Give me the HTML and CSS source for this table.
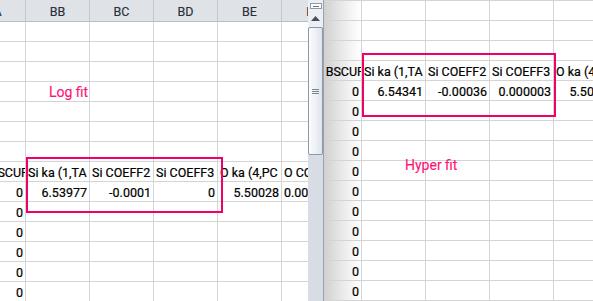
FILE: index.html
```html
<!DOCTYPE html>
<html>
<head>
<meta charset="utf-8">
<title>Log fit vs Hyper fit</title>
<link rel="stylesheet" href="styles.css">
</head>
<body>
<div class="screen">
  <section class="sheet sheet-left">
    <div class="grid grid-left">
      <div class="hd hd-a">A</div><div class="hd">BB</div><div class="hd">BC</div><div class="hd">BD</div><div class="hd">BE</div><div class="hd">BF</div>
      <div class="c"></div><div class="c"></div><div class="c"></div><div class="c"></div><div class="c"></div><div class="c"></div>
      <div class="c"></div><div class="c"></div><div class="c"></div><div class="c"></div><div class="c"></div><div class="c"></div>
      <div class="c"></div><div class="c"></div><div class="c"></div><div class="c"></div><div class="c"></div><div class="c"></div>
      <div class="c"></div><div class="c"></div><div class="c"></div><div class="c"></div><div class="c"></div><div class="c"></div>
      <div class="c"></div><div class="c"></div><div class="c"></div><div class="c"></div><div class="c"></div><div class="c"></div>
      <div class="c"></div><div class="c"></div><div class="c"></div><div class="c"></div><div class="c"></div><div class="c"></div>
      <div class="c"></div><div class="c"></div><div class="c"></div><div class="c"></div><div class="c"></div><div class="c"></div>
      <div class="c clip"><span>BSCUF</span></div><div class="c">Si ka (1,TA</div><div class="c">Si COEFF2</div><div class="c">Si COEFF3</div><div class="c">O ka (4,PC</div><div class="c">O COEFF2</div>
      <div class="c n">0</div><div class="c n">6.53977</div><div class="c n">-0.0001</div><div class="c n">0</div><div class="c n">5.50028</div><div class="c n">0.0004988</div>
      <div class="c n">0</div><div class="c"></div><div class="c"></div><div class="c"></div><div class="c"></div><div class="c"></div>
      <div class="c n">0</div><div class="c"></div><div class="c"></div><div class="c"></div><div class="c"></div><div class="c"></div>
      <div class="c n">0</div><div class="c"></div><div class="c"></div><div class="c"></div><div class="c"></div><div class="c"></div>
      <div class="c n">0</div><div class="c"></div><div class="c"></div><div class="c"></div><div class="c"></div><div class="c"></div>
      <div class="c n">0</div><div class="c"></div><div class="c"></div><div class="c"></div><div class="c"></div><div class="c"></div>
    </div>
    <div class="note note-log">Log fit</div>
    <div class="mark mark-left"></div>
  </section>

  <div class="vscroll">
    <div class="vs-top">
      <div class="vs-split"><i></i></div>
      <svg class="vs-arrow" width="9" height="5" viewBox="0 0 9 5"><path d="M4.5 0 L9 5 L0 5 Z" fill="#4a4f57"/></svg>
    </div>
    <div class="vs-thumb">
      <div class="vs-grip"><i></i><i></i><i></i></div>
    </div>
  </div>

  <section class="sheet sheet-right">
    <div class="grid grid-right">
      <div class="c"></div><div class="c"></div><div class="c"></div><div class="c"></div><div class="c"></div>
      <div class="c"></div><div class="c"></div><div class="c"></div><div class="c"></div><div class="c"></div>
      <div class="c"></div><div class="c"></div><div class="c"></div><div class="c"></div><div class="c"></div>
      <div class="c clip"><span>BSCUF</span></div><div class="c">Si ka (1,TA</div><div class="c">Si COEFF2</div><div class="c">Si COEFF3</div><div class="c">O ka (4,PC</div>
      <div class="c n">0</div><div class="c n">6.54341</div><div class="c n">-0.00036</div><div class="c n">0.000003</div><div class="c n">5.50166</div>
      <div class="c n">0</div><div class="c"></div><div class="c"></div><div class="c"></div><div class="c"></div>
      <div class="c n">0</div><div class="c"></div><div class="c"></div><div class="c"></div><div class="c"></div>
      <div class="c n">0</div><div class="c"></div><div class="c"></div><div class="c"></div><div class="c"></div>
      <div class="c n">0</div><div class="c"></div><div class="c"></div><div class="c"></div><div class="c"></div>
      <div class="c n">0</div><div class="c"></div><div class="c"></div><div class="c"></div><div class="c"></div>
      <div class="c n">0</div><div class="c"></div><div class="c"></div><div class="c"></div><div class="c"></div>
      <div class="c n">0</div><div class="c"></div><div class="c"></div><div class="c"></div><div class="c"></div>
      <div class="c n">0</div><div class="c"></div><div class="c"></div><div class="c"></div><div class="c"></div>
      <div class="c n">0</div><div class="c"></div><div class="c"></div><div class="c"></div><div class="c"></div>
      <div class="c n">0</div><div class="c"></div><div class="c"></div><div class="c"></div><div class="c"></div>
    </div>
    <div class="note note-hyper">Hyper fit</div>
    <div class="mark mark-right"></div>
  </section>
</div>
</body>
</html>
```

FILE: styles.css
```css
* { box-sizing: border-box; }

html, body {
  margin: 0;
  padding: 0;
}

body {
  width: 593px;
  height: 301px;
  overflow: hidden;
  background: #fff;
  font-family: Roboto, "Liberation Sans", sans-serif;
  font-size: 12.5px;
  color: #000;
}

.screen {
  display: flex;
  height: 301px;
}

.sheet {
  position: relative;
  overflow: hidden;
  height: 301px;
}

.sheet-left {
  width: 308px;
  flex: none;
}

.sheet-right {
  flex: 1;
  background: linear-gradient(90deg, #d0d0d0 0, #e6e6e6 16px, #f8f8f8 30px, #fff 37px);
}

.grid {
  display: grid;
  width: max-content;
}

.grid-left {
  grid-template-columns: repeat(6, 64px);
  margin-left: -38px;
}

.grid-right {
  grid-template-columns: 38px repeat(4, 64px);
  border-top: 1px solid #d4d4d4;
}

.hd {
  height: 22px;
  background: #dfe3e8;
  border-right: 1px solid #c4c9cf;
  border-bottom: 1px solid #b8bec6;
  line-height: 24px;
  text-align: center;
  color: #2a3039;
  white-space: nowrap;
  overflow: hidden;
  -webkit-text-stroke: 0.15px #2a3039;
}

.hd-a {
  padding-left: 8px;
}

.c {
  height: 20px;
  border-right: 1px solid #d4d4d4;
  border-bottom: 1px solid #d4d4d4;
  line-height: 21px;
  padding: 0 2px;
  white-space: nowrap;
  overflow: hidden;
  -webkit-text-stroke: 0.2px #000;
}

.n {
  text-align: right;
}

.clip {
  display: flex;
  justify-content: flex-end;
  padding: 0;
}

.clip span {
  flex: none;
  margin-right: -3px;
}

.note {
  position: absolute;
  font-size: 14px;
  line-height: 16px;
  color: #ff1477;
  white-space: nowrap;
  -webkit-text-stroke: 0.15px #ff1477;
}

.note-log {
  left: 49px;
  top: 84px;
}

.note-hyper {
  left: 81px;
  top: 157px;
}

.mark {
  position: absolute;
  border: 2px solid #f2006a;
}

.mark-left {
  left: 26px;
  top: 157px;
  width: 197px;
  height: 56px;
}

.mark-right {
  left: 38px;
  top: 53px;
  width: 194px;
  height: 64px;
}

/* vertical scrollbar of the left window */
.vscroll {
  width: 16px;
  flex: none;
  height: 301px;
  background: #d8dde5;
  border-right: 1px solid #9ba2ac;
  display: flex;
  flex-direction: column;
}

.vs-top {
  height: 27px;
  flex: none;
  background: #eceff3;
  display: flex;
  flex-direction: column;
  align-items: center;
}

.vs-split {
  width: 12px;
  height: 6px;
  margin-top: 3px;
  border: 1px solid #8f98a4;
  background: #fff;
  display: flex;
  align-items: center;
  justify-content: center;
}

.vs-split i {
  display: block;
  width: 6px;
  height: 1px;
  background: #6d737c;
}

.vs-arrow {
  display: block;
  margin-top: 7px;
}

.vs-thumb {
  height: 128px;
  flex: none;
  border: 1px solid #8e99a7;
  border-radius: 2px;
  background: linear-gradient(90deg, #fbfcfd 0, #eef1f5 50%, #dfe4ec 100%);
  display: flex;
  align-items: center;
  justify-content: center;
}

.vs-grip {
  display: flex;
  flex-direction: column;
  gap: 1px;
}

.vs-grip i {
  display: block;
  width: 7px;
  height: 1px;
  background: #7c8591;
}
```
